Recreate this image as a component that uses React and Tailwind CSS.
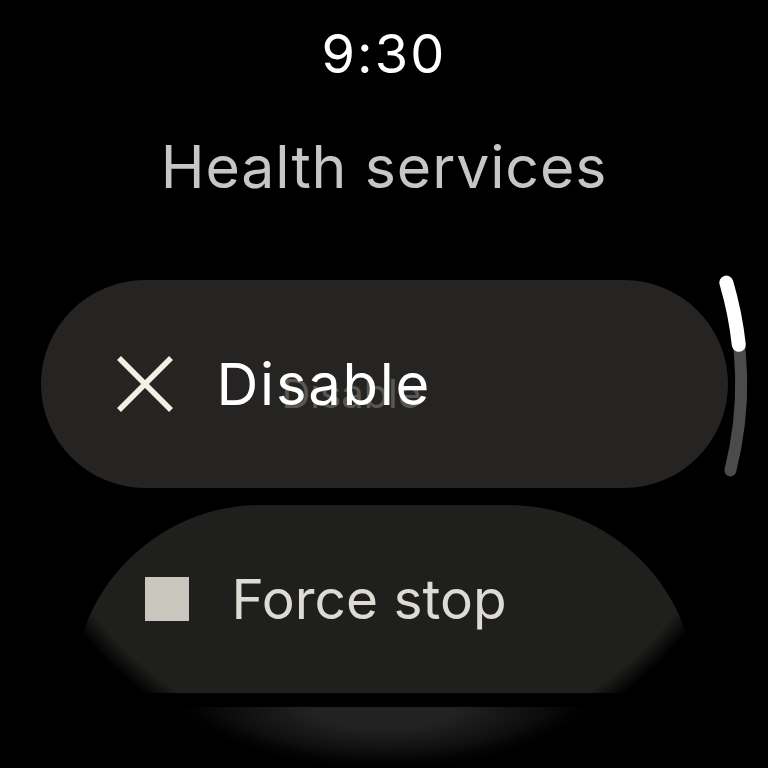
import React from 'react';

const CloseIcon = () => (
  <svg width="56" height="56" viewBox="0 0 56 56" className="shrink-0">
    <line x1="2" y1="2" x2="54" y2="54" stroke="#f4f0e4" strokeWidth="5.5" />
    <line x1="54" y1="2" x2="2" y2="54" stroke="#f4f0e4" strokeWidth="5.5" />
  </svg>
);

const ScrollIndicator = () => (
  <svg width="768" height="768" viewBox="0 0 768 768" className="absolute inset-0 pointer-events-none">
    <path d="M 726.3 282.6 A 357 357 0 0 1 730.4 470.4" fill="none" stroke="#4b4b4b" strokeWidth="12" strokeLinecap="round" />
    <path d="M 726.3 282.6 A 357 357 0 0 1 738.8 344.8" fill="none" stroke="#ffffff" strokeWidth="14" strokeLinecap="round" />
  </svg>
);

export default function App() {
  return (
    <div className="relative w-[768px] h-[768px] overflow-hidden bg-black font-['Inter',sans-serif]">
      <div className="flex flex-col items-center">
        {/* Time */}
        <div className="mt-[27px] h-[54px] text-[54px] leading-none tracking-[0.04em] text-white">9:30</div>

        {/* Title */}
        <h1 className="mt-[56px] h-[59px] text-[59px] leading-none text-[#c4c7c5] tracking-[0.015em]">
          Health services
        </h1>

        {/* Disable chip */}
        <button className="relative mt-[84px] flex h-[208px] w-[687px] items-center rounded-full bg-[#262422] pl-[76px]">
          <CloseIcon />
          <span className="relative ml-[44px] text-[58px] leading-none tracking-[0.03em] text-white">
            <span className="absolute left-[65px] top-[19px] text-[40px] tracking-normal text-[#8d8a83] opacity-50">Disable</span>
            <span className="relative">Disable</span>
          </span>
        </button>

        {/* Force stop chip */}
        <button className="mt-[17px] flex h-[188px] w-[623px] items-center rounded-t-full bg-[#1f1f1d] pl-[72px]">
          <span className="h-[44px] w-[44px] shrink-0 bg-[#c9c7bd]" />
          <span className="ml-[43px] text-[55px] leading-none text-[#dddbd3]">Force stop</span>
        </button>

        {/* Next chip, mostly off screen */}
        <div className="mt-[14px] h-[61px] w-[406px] bg-[radial-gradient(ellipse_at_top,#222222_25%,transparent_72%)]" />
      </div>

      {/* Round screen edge */}
      <div className="pointer-events-none absolute inset-0 bg-[radial-gradient(circle_at_center,transparent_370px,#000000_392px)]" />

      <ScrollIndicator />
    </div>
  );
}
